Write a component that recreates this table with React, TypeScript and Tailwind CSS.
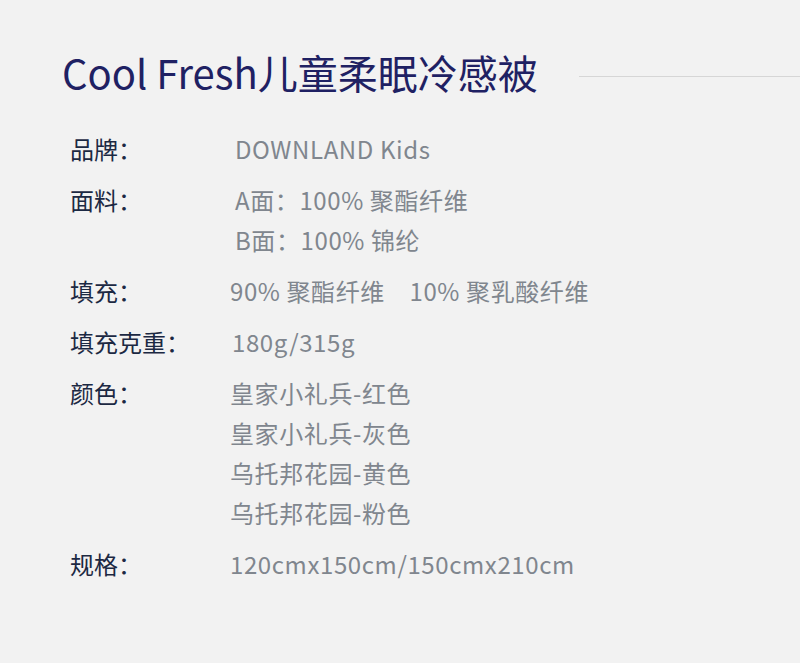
const font = {
  fontFamily: '"Noto Sans CJK SC", "Noto Sans", sans-serif',
};

const specs: { label: string; values: string[]; indent?: string }[] = [
  { label: "品牌：", values: ["DOWNLAND Kids"], indent: "pl-[5px]" },
  { label: "面料：", values: ["A面：100% 聚酯纤维", "B面：100% 锦纶"], indent: "pl-[5px]" },
  { label: "填充：", values: ["90% 聚酯纤维\u300010% 聚乳酸纤维"] },
  { label: "填充克重：", values: ["180g/315g"], indent: "pl-[2px]" },
  {
    label: "颜色：",
    values: ["皇家小礼兵-红色", "皇家小礼兵-灰色", "乌托邦花园-黄色", "乌托邦花园-粉色"],
  },
  { label: "规格：", values: ["120cmx150cm/150cmx210cm"] },
];

const App = () => {
  return (
    <div className="w-[800px] h-[663px] bg-[#f2f2f2] overflow-hidden" style={font}>
      {/* TITLE */}
      <div className="flex items-center pt-[46px] pl-[62px]">
        <h1 className="text-[40px] leading-[52px] text-[#1f2163] whitespace-nowrap">
          Cool Fresh儿童柔眠冷感被
        </h1>
        <div className="ml-[41px] mt-[9px] h-px flex-1 bg-[#d6d6d6]" />
      </div>

      {/* SPEC TABLE */}
      <div className="mt-[31px] pl-[70px] flex flex-col gap-[11px]">
        {specs.map((row) => (
          <div key={row.label} className="flex">
            <div className="w-[160px] shrink-0 text-[24px] leading-[40px] text-[#1c2943]">
              {row.label}
            </div>
            <div className={`flex flex-col ${row.indent ?? ""}`}>
              {row.values.map((v) => (
                <p
                  key={v}
                  className="text-[24px] leading-[40px] tracking-[0.6px] text-[#80868e] whitespace-pre"
                >
                  {v}
                </p>
              ))}
            </div>
          </div>
        ))}
      </div>
    </div>
  );
};

export default App;
